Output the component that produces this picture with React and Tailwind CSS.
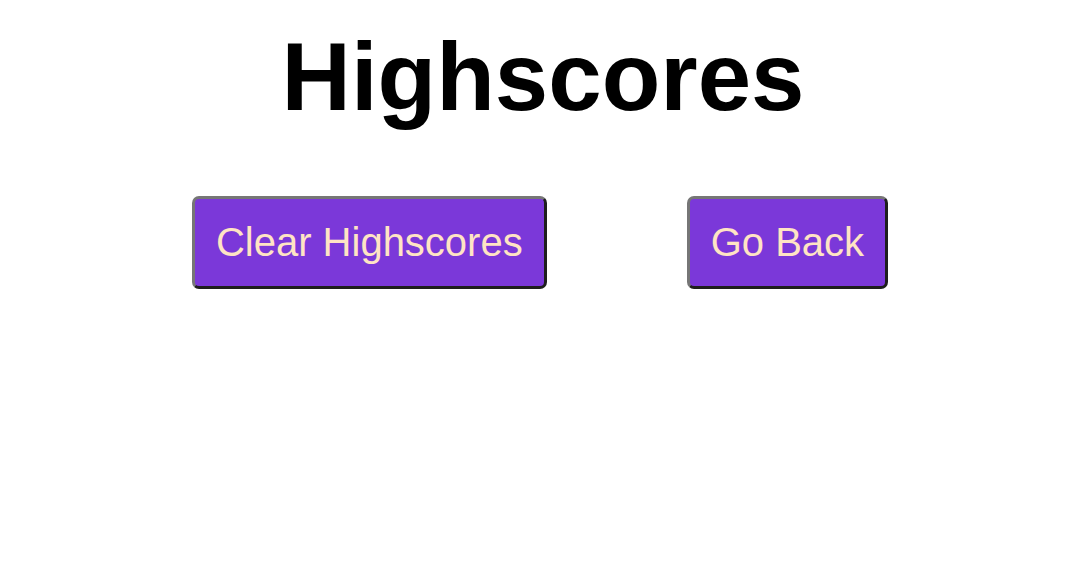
export default function App() {
  return (
    <div className="min-h-[588px] w-full bg-white font-['Liberation_Sans',Arial,sans-serif]">
      {/* Title */}
      <h1 className="pt-[22px] text-center text-[96px] font-bold leading-[normal] text-black">
        Highscores
      </h1>

      {/* Actions */}
      <div className="mt-[64px] flex justify-center gap-[140px] pr-[6px]">
        <button className="rounded-[7px] border-[3px] border-t-[#767676] border-l-[#767676] border-r-[#1e1e1e] border-b-[#1e1e1e] bg-[#7b38d9] px-[21px] py-[21px] text-[40px] leading-[normal] text-[#ffe4c4]">
          Clear Highscores
        </button>
        <button className="rounded-[7px] border-[3px] border-t-[#767676] border-l-[#767676] border-r-[#1e1e1e] border-b-[#1e1e1e] bg-[#7b38d9] px-[21px] py-[21px] text-[40px] leading-[normal] text-[#ffe4c4]">
          Go Back
        </button>
      </div>
    </div>
  )
}
